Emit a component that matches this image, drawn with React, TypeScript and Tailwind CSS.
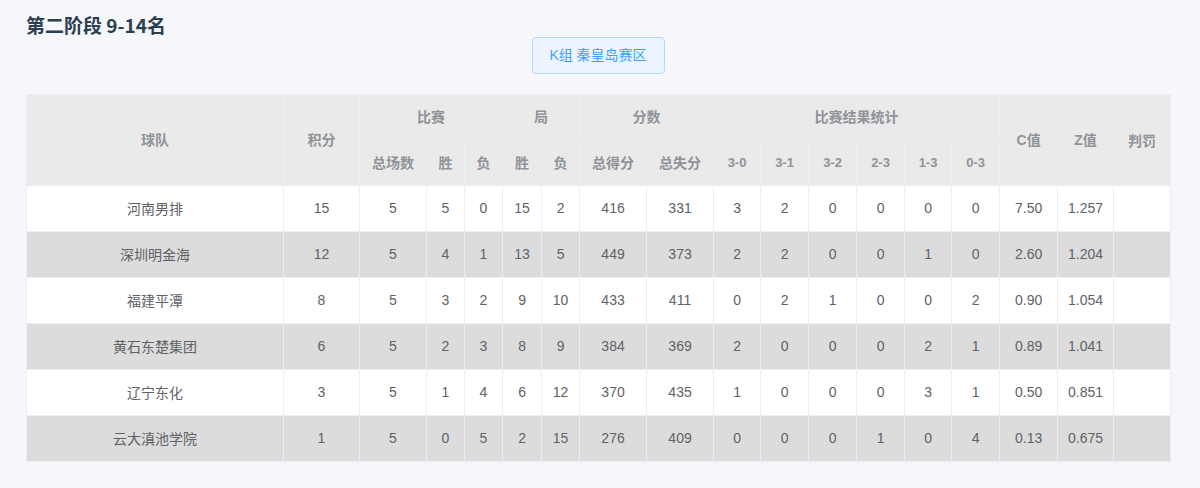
import React from "react";

type Row = {
    team: string;
    pts: number;
    played: number;
    w: number;
    l: number;
    sw: number;
    sl: number;
    pf: number;
    pa: number;
    r: number[];
    c: string;
    z: string;
};

const rows: Row[] = [
    { team: "河南男排", pts: 15, played: 5, w: 5, l: 0, sw: 15, sl: 2, pf: 416, pa: 331, r: [3, 2, 0, 0, 0, 0], c: "7.50", z: "1.257" },
    { team: "深圳明金海", pts: 12, played: 5, w: 4, l: 1, sw: 13, sl: 5, pf: 449, pa: 373, r: [2, 2, 0, 0, 1, 0], c: "2.60", z: "1.204" },
    { team: "福建平潭", pts: 8, played: 5, w: 3, l: 2, sw: 9, sl: 10, pf: 433, pa: 411, r: [0, 2, 1, 0, 0, 2], c: "0.90", z: "1.054" },
    { team: "黄石东楚集团", pts: 6, played: 5, w: 2, l: 3, sw: 8, sl: 9, pf: 384, pa: 369, r: [2, 0, 0, 0, 2, 1], c: "0.89", z: "1.041" },
    { team: "辽宁东化", pts: 3, played: 5, w: 1, l: 4, sw: 6, sl: 12, pf: 370, pa: 435, r: [1, 0, 0, 0, 3, 1], c: "0.50", z: "0.851" },
    { team: "云大滇池学院", pts: 1, played: 5, w: 0, l: 5, sw: 2, sl: 15, pf: 276, pa: 409, r: [0, 0, 0, 1, 0, 4], c: "0.13", z: "0.675" },
];

const widths = [257, 76, 67, 38, 38, 39, 38, 67, 67, 47, 48, 48, 48, 47, 48, 58, 56, 57];
const results = ["3-0", "3-1", "3-2", "2-3", "1-3", "0-3"];

const th = "border border-[#ebeef5] bg-[#eaeaea] font-bold text-[#909399] text-center align-middle";
const td = "border border-[#ebeef5] text-center align-middle h-[46px]";

const App: React.FC = () => {
    return (
        <div className="min-h-screen bg-[#f5f7fa] pl-[26px] pr-[30px] pt-[11px] font-['Liberation_Sans','Noto_Sans_CJK_SC',sans-serif]">
            <h2 className="text-[19px] leading-[28px] font-bold text-[#2c3e50] font-['Noto_Sans_CJK_SC',sans-serif]">第二阶段 9-14名</h2>
            <div className="flex justify-center mt-[-2px]">
                <button className="w-[133px] h-[37px] rounded-[4px] border border-[#b3d8ff] bg-[#ecf5ff] text-[#409eff] text-[14px]">
                    K组 秦皇岛赛区
                </button>
            </div>
            <table className="mt-[20px] w-[1144px] table-fixed border-collapse text-[14px] text-[#606266]">
                <colgroup>
                    {widths.map((w, i) => (
                        <col key={i} style={{ width: w }} />
                    ))}
                </colgroup>
                <thead>
                    <tr className="h-[46px]">
                        <th rowSpan={2} className={th}>球队</th>
                        <th rowSpan={2} className={th}>积分</th>
                        <th colSpan={3} className={th}>比赛</th>
                        <th colSpan={2} className={th}>局</th>
                        <th colSpan={2} className={th}>分数</th>
                        <th colSpan={6} className={th}>比赛结果统计</th>
                        <th rowSpan={2} className={th}>C值</th>
                        <th rowSpan={2} className={th}>Z值</th>
                        <th rowSpan={2} className={th + " align-top pt-[36px]"}>判罚</th>
                    </tr>
                    <tr className="h-[45px]">
                        <th className={th}>总场数</th>
                        <th className={th}>胜</th>
                        <th className={th}>负</th>
                        <th className={th}>胜</th>
                        <th className={th}>负</th>
                        <th className={th}>总得分</th>
                        <th className={th}>总失分</th>
                        {results.map((r) => (
                            <th key={r} className={th + " text-[13px]"}>{r}</th>
                        ))}
                    </tr>
                </thead>
                <tbody>
                    {rows.map((row, i) => (
                        <tr key={row.team} className={i % 2 === 1 ? "bg-[#dcdcdc]" : "bg-white"}>
                            <td className={td + " font-['Noto_Sans_CJK_SC',sans-serif]"}>{row.team}</td>
                            <td className={td}>{row.pts}</td>
                            <td className={td}>{row.played}</td>
                            <td className={td}>{row.w}</td>
                            <td className={td}>{row.l}</td>
                            <td className={td}>{row.sw}</td>
                            <td className={td}>{row.sl}</td>
                            <td className={td}>{row.pf}</td>
                            <td className={td}>{row.pa}</td>
                            {row.r.map((v, j) => (
                                <td key={j} className={td}>{v}</td>
                            ))}
                            <td className={td}>{row.c}</td>
                            <td className={td}>{row.z}</td>
                            <td className={td}></td>
                        </tr>
                    ))}
                </tbody>
            </table>
        </div>
    );
};

export default App;
